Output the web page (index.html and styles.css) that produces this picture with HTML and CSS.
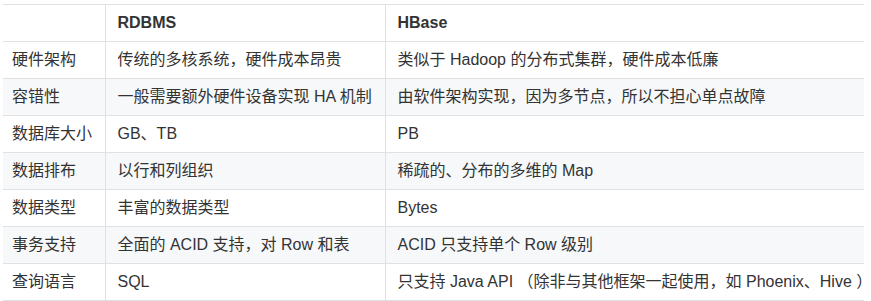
FILE: index.html
```html
<!DOCTYPE html>
<html lang="zh">
<head>
<meta charset="utf-8">
<title>RDBMS vs HBase</title>
<link rel="stylesheet" href="styles.css">
</head>
<body>
<div class="wrap">
<table class="cmp">
<colgroup><col class="c1"><col class="c2"><col class="c3"></colgroup>
<thead>
<tr><th></th><th>RDBMS</th><th>HBase</th></tr>
</thead>
<tbody>
<tr><td>硬件架构</td><td>传统的多核系统，硬件成本昂贵</td><td>类似于 Hadoop 的分布式集群，硬件成本低廉</td></tr>
<tr><td>容错性</td><td>一般需要额外硬件设备实现 HA 机制</td><td>由软件架构实现，因为多节点，所以不担心单点故障</td></tr>
<tr><td>数据库大小</td><td>GB、TB</td><td>PB</td></tr>
<tr><td>数据排布</td><td>以行和列组织</td><td>稀疏的、分布的多维的 Map</td></tr>
<tr><td>数据类型</td><td>丰富的数据类型</td><td>Bytes</td></tr>
<tr><td>事务支持</td><td>全面的 ACID 支持，对 Row 和表</td><td>ACID 只支持单个 Row 级别</td></tr>
<tr><td>查询语言</td><td>SQL</td><td>只支持 Java API （除非与其他框架一起使用，如 Phoenix、Hive ）</td></tr>
</tbody>
</table>
</div>
</body>
</html>
```
FILE: styles.css
```css
html, body {
  margin: 0;
  padding: 0;
  background: #ffffff;
}
.wrap {
  padding: 4px 7px 0 3px;
}
.cmp {
  border-collapse: collapse;
  width: 861px;
  table-layout: fixed;
  font-family: "Liberation Sans", "Noto Sans CJK SC", sans-serif;
  font-size: 16px;
  line-height: 24px;
  color: #333333;
}
.c1 { width: 102px; }
.c2 { width: 280px; }
.c3 { width: 479px; }
.cmp th,
.cmp td {
  border: 1px solid #dfe2e5;
  padding: 6px 12px;
  text-align: left;
  white-space: nowrap;
  overflow: visible;
}
.cmp th {
  font-weight: bold;
}
.cmp td:first-child,
.cmp th:first-child {
  border-left: none;
  padding-left: 9px;
}
.cmp td:last-child,
.cmp th:last-child {
  border-right: none;
}
.cmp tbody tr:nth-child(2n) {
  background: #f6f8fa;
}
```
